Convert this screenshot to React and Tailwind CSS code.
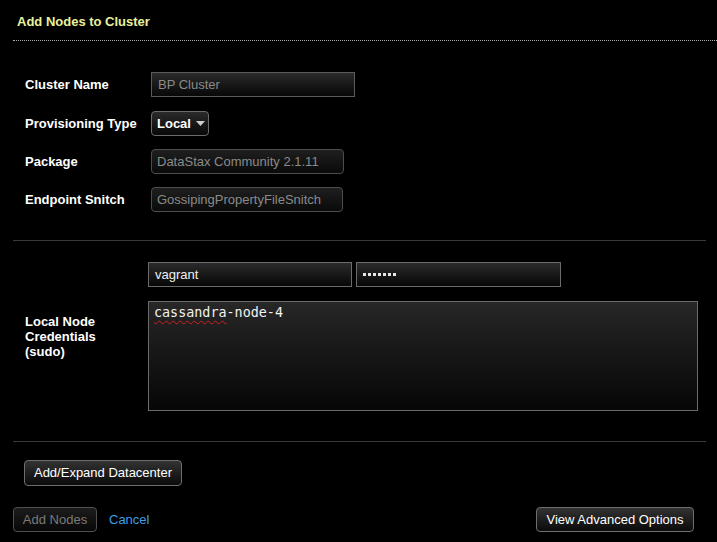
export default function App() {
  const label = "text-[13px] font-bold text-white leading-[15px]";
  const field =
    "h-[25px] border border-[#6b6b6b] bg-gradient-to-b from-[#2b2b2b] to-[#080808] px-[6px] flex items-center text-[13px]";
  const disabled =
    "h-[25px] rounded-[4px] border border-[#4d4d4d] bg-gradient-to-b from-[#1f1f1f] to-[#0a0a0a] px-[5px] flex items-center text-[13px] text-[#8a8a8a]";
  const button =
    "rounded-[4px] border border-[#6e6e6e] bg-gradient-to-b from-[#333] to-[#0b0b0b] px-[8px] text-[13px] text-white flex items-center";

  return (
    <div className="min-h-screen w-[717px] h-[542px] overflow-hidden bg-black text-white font-['Liberation_Sans',Arial,sans-serif]">
      <div className="h-[40px] pl-[17px] pt-[12px] text-[13px] font-bold text-[#e9f19c]">
        Add Nodes to Cluster
      </div>
      <div className="ml-[13px] border-t border-dotted border-[#b0b0b0]" />

      <div className="pl-[25px] pt-[31px] flex flex-col gap-[13px]">
        <div className="flex items-center">
          <div className={`${label} w-[126px]`}>Cluster Name</div>
          <div className="h-[25px] w-[204px] border border-[#5a5a5a] bg-gradient-to-b from-[#2b2b2b] to-[#080808] px-[6px] flex items-center text-[13px] text-[#8a8a8a]">
            BP Cluster
          </div>
        </div>
        <div className="flex items-center mt-[1px]">
          <div className={`${label} w-[126px]`}>Provisioning Type</div>
          <div className="h-[25px] w-[58px] rounded-[4px] border border-[#6b6b6b] bg-gradient-to-b from-[#2b2b2b] to-[#080808] pl-[5px] flex items-center gap-[5px] text-[13px] font-bold">
            Local
            <svg width="9" height="5" viewBox="0 0 9 5">
              <path d="M0 0h9L4.5 5z" fill="#cfcfcf" />
            </svg>
          </div>
        </div>
        <div className="flex items-center">
          <div className={`${label} w-[126px]`}>Package</div>
          <div className={`${disabled} w-[193px]`}>DataStax Community 2.1.11</div>
        </div>
        <div className="flex items-center">
          <div className={`${label} w-[126px]`}>Endpoint Snitch</div>
          <div className={`${disabled} w-[192px]`}>GossipingPropertyFileSnitch</div>
        </div>
      </div>

      <div className="ml-[13px] mr-[11px] mt-[28px] border-t border-[#3a3a3a]" />

      <div className="pl-[25px] pt-[21px] flex items-center">
        <div className={`${label} w-[123px]`}>
          Local Node
          <br />
          Credentials
          <br />
          (sudo)
        </div>
        <div className="flex flex-col gap-[14px]">
          <div className="flex gap-[4px]">
            <div className={`${field} w-[204px] text-[#f0f0f0]`}>vagrant</div>
            <div className={`${field} w-[205px] gap-[2px]`}>
              {Array.from({ length: 7 }).map((_, i) => (
                <span key={i} className="w-[3px] h-[3px] bg-[#e6e6e6]" />
              ))}
            </div>
          </div>
          <div className="w-[550px] h-[110px] border border-[#6b6b6b] bg-gradient-to-b from-[#272727] to-[#070707] px-[5px] pt-[1px] font-['DejaVu_Sans_Mono',monospace] text-[13.4px] text-[#f2f2f2]">
            <span className="underline decoration-wavy decoration-[#d02020] decoration-1 underline-offset-[3px]">cassandra</span>-node-4
          </div>
        </div>
      </div>

      <div className="ml-[13px] mr-[11px] mt-[30px] border-t border-[#3a3a3a]" />

      <div className="pl-[24px] pt-[18px]">
        <button className={`${button} h-[26px] w-[158px] justify-center`}>Add/Expand Datacenter</button>
      </div>

      <div className="pl-[13px] pr-[23px] pt-[21px] flex items-center">
        <button className="h-[25px] w-[84px] rounded-[4px] border border-[#4f4f4f] bg-gradient-to-b from-[#1c1c1c] to-[#080808] text-[13px] text-[#7a7a7a] flex items-center justify-center">
          Add Nodes
        </button>
        <span className="ml-[12px] text-[13px] text-[#3d9fe6]">Cancel</span>
        <button className={`${button} h-[25px] ml-auto w-[158px] justify-center`}>View Advanced Options</button>
      </div>
    </div>
  );
}
